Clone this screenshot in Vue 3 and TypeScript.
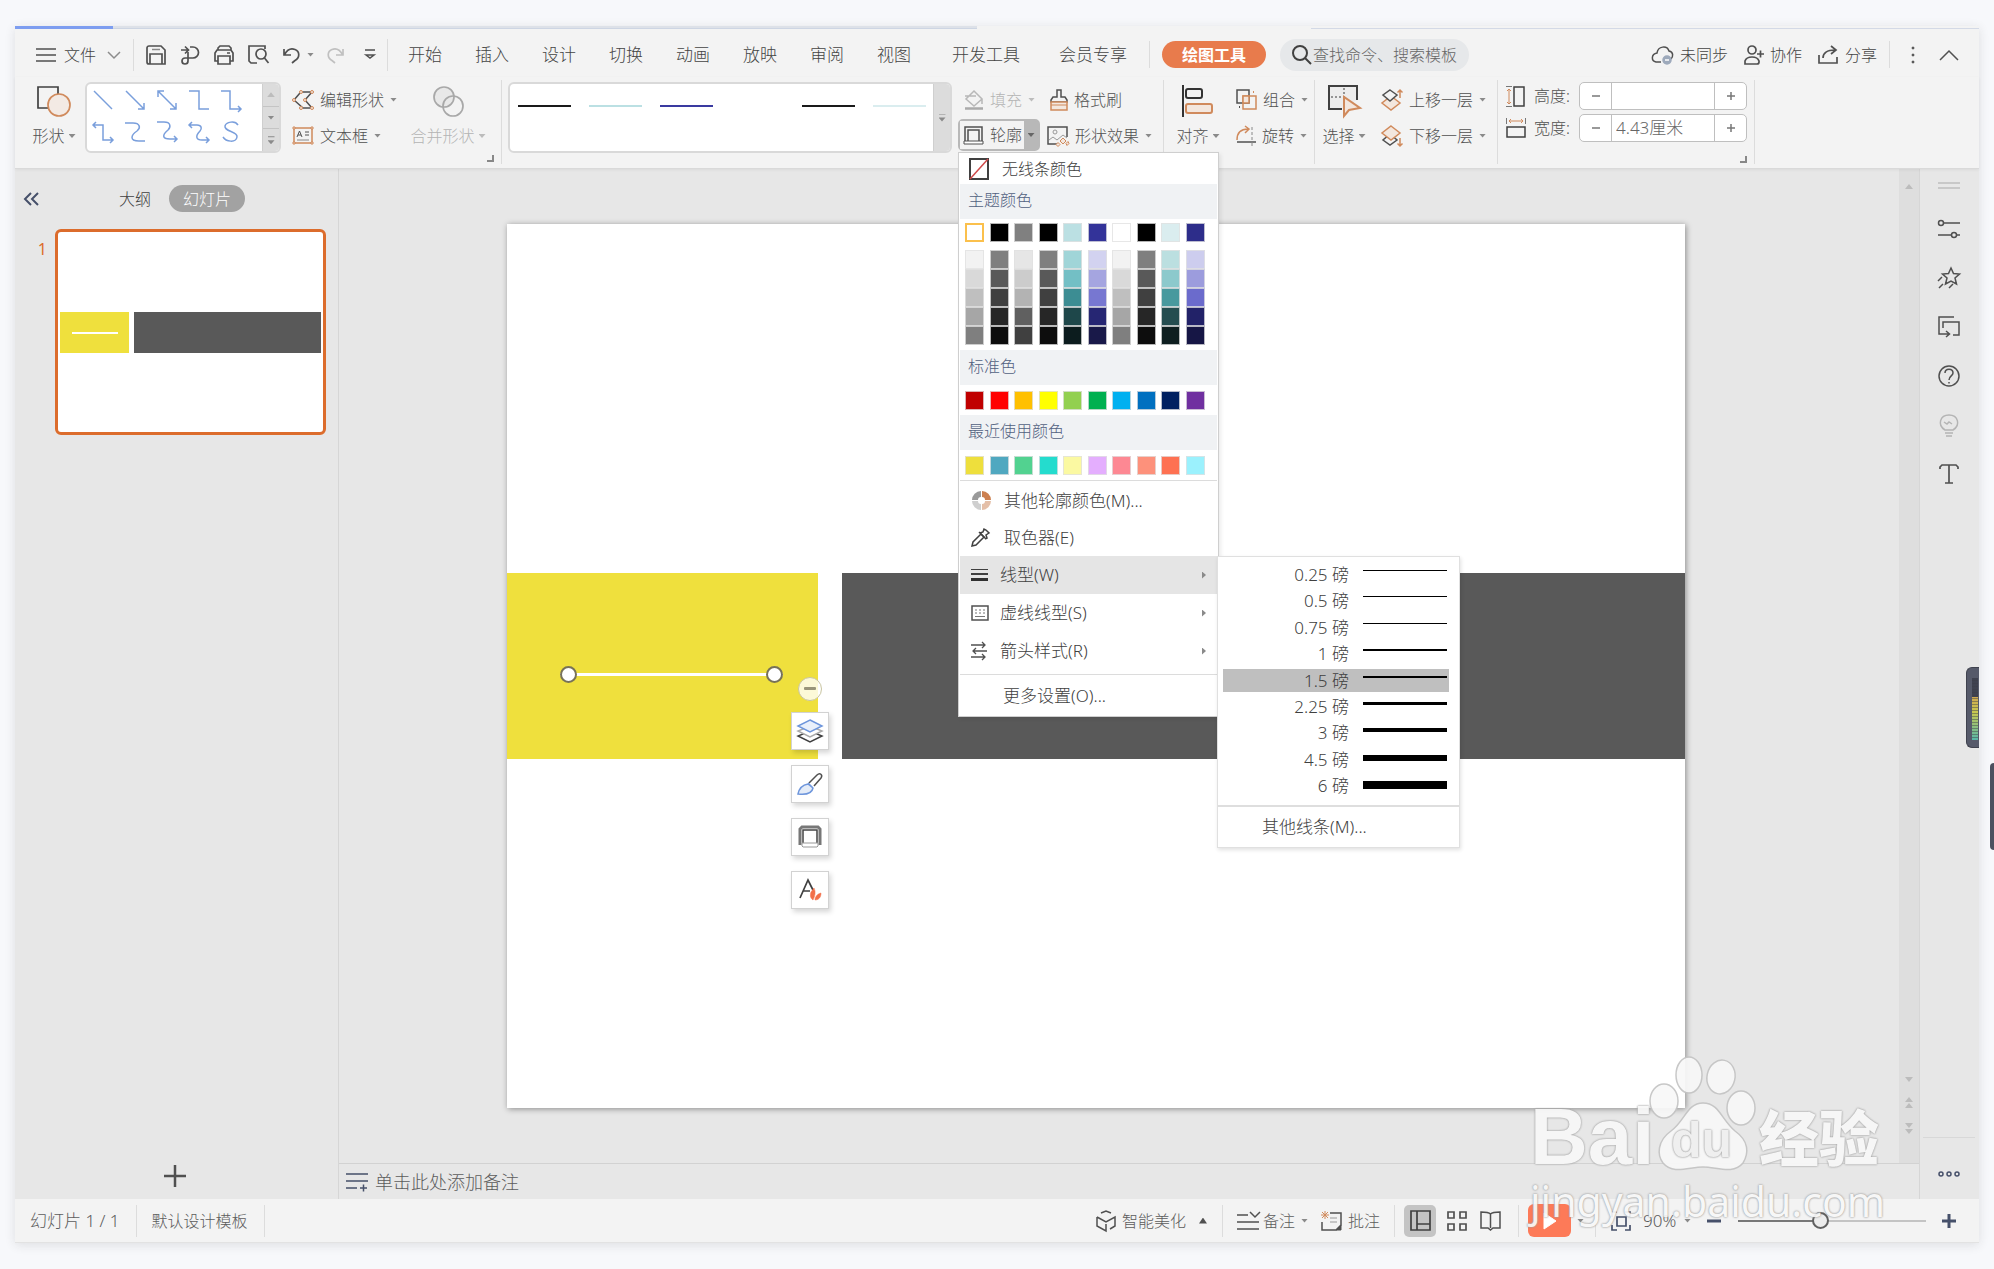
<script setup lang="ts">
import { h, ref } from 'vue'

type Stroke = [d: string, stroke?: string, fill?: string, width?: number]
interface Glyph { w: number; h: number; paths: Stroke[] }

const INK = '#505050'
const ORANGE = '#d08a5c'
const PEACH = '#f3e7de'
const BLUE = '#7a9fdc'
const PALE = '#a8a8a8'
const NAVY = '#46506a'

const ring = (cx: number, cy: number, r: number): string =>
  `M${cx - r} ${cy}a${r} ${r} 0 1 0 ${2 * r} 0a${r} ${r} 0 1 0 ${-2 * r} 0z`

const glyphs: Record<string, Glyph> = {
  menu: { w: 20, h: 14, paths: [['M0 1h20M0 7h20M0 13h20']] },
  chevronDown: { w: 14, h: 8, paths: [['M1 1l6 6l6-6', '#8c8c8c']] },
  chevronUp: { w: 20, h: 12, paths: [['M1 11l9-9l9 9']] },
  collapse: { w: 15, h: 14, paths: [['M7 1L1 7l6 6M14 1L8 7l6 6', NAVY, 'none', 2]] },
  save: { w: 20, h: 20, paths: [['M1 3a2 2 0 0 1 2-2h12l4 4v14H3a2 2 0 0 1-2-2zM4 19V9h12v10', '#505050', 'none', 1.7], ['M6 4.500h8', '#888']] },
  pdf: { w: 20, h: 20, paths: [['M1 5h7M5 1.500L8.500 5L5 8.500', '#505050', 'none', 1.7], ['M10 2h3a5 5 0 0 1 0 11H5a3 3 0 1 0 3 3V7', '#505050', 'none', 1.7]] },
  print: { w: 20, h: 20, paths: [['M4 5V3l2-2h9l2 2v2M4 16H1V8l2-3h14l2 3v8h-3M4 19v-8h12v8z', '#505050', 'none', 1.7], ['M13 8h3']] },
  preview: { w: 21, h: 20, paths: [['M9 18H3l-2-2V1h16v3', '#505050', 'none', 1.7], [ring(13, 9, 5), '#505050', 'none', 1.7], ['M16.500 13l4 5', '#505050', 'none', 1.7]] },
  undo: { w: 18, h: 18, paths: [['M1 3v6h7M1.500 8.500C4 4 8 2 12 3.500c5 2 5 8 0 11L9 17', '#505050', 'none', 1.7]] },
  redo: { w: 18, h: 18, paths: [['M17 3v6h-7M16.500 8.500C14 4 10 2 6 3.500c-5 2-5 8 0 11L9 17', '#c0c0c0', 'none', 1.7]] },
  more: { w: 12, h: 11, paths: [['M1 1h10M2 6l4 3l4-3z', '#505050', 'none', 1.5]] },
  search: { w: 22, h: 22, paths: [[ring(9, 9, 7), '#404040', 'none', 2], ['M14 14l6 6', '#404040', 'none', 2]] },
  cloud: { w: 23, h: 20, paths: [['M10 17H5c-5-1-5-8 1-9C7 1 16 0 18 6c5 1 4 6 2 8'], [ring(16, 15, 4), '#9da9bb', '#9da9bb'], ['M14 15h4', '#fff']] },
  person: { w: 20, h: 20, paths: [[ring(8, 5, 4), INK, 'none', 1.7], ['M1 19v-3c1-3 3-4 7-4c4 0 6 1 7 4v1c0 1-1 2-2 2zM13 9h7M16.500 5.500v7', INK, 'none', 1.7]] },
  share: { w: 21, h: 19, paths: [['M1 10v8h18v-6M5 13c0-5 4-8 12-8M13 1l5 4l-5 4', INK, 'none', 1.7]] },
  dots: { w: 4, h: 18, paths: [[ring(2, 2, 1), INK, INK, 1], [ring(2, 9, 1), INK, INK, 1], [ring(2, 16, 1), INK, INK, 1]] },
  shapes: { w: 34, h: 31, paths: [['M1 1h20v21H1z', '#404040', 'none', 1.7], [ring(22, 19, 11), ORANGE, '#f3eae4', 1.7]] },
  editShape: { w: 22, h: 20, paths: [['M8 3L2 10l9 8h9l-7-8l7-8H9', INK], [ring(9, 2, 1.5), ORANGE, PEACH, 1], [ring(20, 2, 1.5), ORANGE, PEACH, 1], [ring(2, 10, 1.5), ORANGE, PEACH, 1], [ring(13, 10, 1.5), ORANGE, PEACH, 1], [ring(9, 18, 1.5), ORANGE, PEACH, 1], [ring(20, 18, 1.5), ORANGE, PEACH, 1]] },
  textBox: { w: 22, h: 19, paths: [['M2 2h18v15H2z', ORANGE], ['M5 11L7.500 5L10 11M6 9h3M13 6h4M13 9h4', INK, 'none', 1], ['M5 14h12', '#888', 'none', 1], ['M1 1h2v2H1zM19 1h2v2h-2zM1 16h2v2H1zM19 16h2v2h-2z', ORANGE, PEACH, 1]] },
  merge: { w: 31, h: 31, paths: [[ring(11, 11, 10), PALE, '#e8e8e8', 1.7], [ring(20, 20, 10), PALE, 'none', 1.7]] },
  launcher: { w: 7, h: 7, paths: [['M0 6h6V0', '#888', 'none', 2]] },
  fill: { w: 20, h: 20, paths: [['M10 1l8 8l-8 7l-8-7zM1 6h11M18 9v5', '#b8b8b8'], ['M1 18.500h18', '#aaa', 'none', 2.5]] },
  outline: { w: 21, h: 19, paths: [['M2 15V1h17v14', INK], ['M5 15V4h11v11', INK], ['M1 15h19v3H1z', INK, '#fff', 1]] },
  brush: { w: 18, h: 22, paths: [['M7 8V1h4v7h4l2 3v2H1v-2l2-3z', INK], ['M1 13h16v8H1z', ORANGE, PEACH], ['M1 16h16', ORANGE, 'none', 1]] },
  effects: { w: 22, h: 20, paths: [['M11 18H1V1h19v10', INK], [ring(8, 6, 2), '#999', 'none', 1], ['M2 14l4-3l4 3l6-5l4 3', '#999', 'none', 1], ['M16 12l3 3l-3 3l-3-3zM11 16.500l2 2l-2 2l-2-2zM21 15.500l1 2l-2 2l-1-2z', ORANGE, PEACH, 1]] },
  align: { w: 32, h: 32, paths: [['M1 0v32', '#333', 'none', 2], ['M6 4h12a2 2 0 0 1 2 2v5a2 2 0 0 1-2 2H6a2 2 0 0 1-2-2V6a2 2 0 0 1 2-2z', '#333', 'none', 2], ['M6 19h22a2 2 0 0 1 2 2v5a2 2 0 0 1-2 2H6a2 2 0 0 1-2-2v-5a2 2 0 0 1 2-2z', ORANGE, PEACH, 2]] },
  group: { w: 21, h: 21, paths: [['M1 1h12v13H1z', INK], ['M7 7h13v13H7z', ORANGE], ['M7 7h6v7H7z', ORANGE, PEACH], ['M17 3h1', ORANGE, 'none', 2], ['M3 18h1', INK, 'none', 2]] },
  rotate: { w: 20, h: 20, paths: [['M1 14C1 7 5 3 12 3M9 0l4 3l-4 4', ORANGE], ['M1 16h19', INK], ['M16 1v3M16 6v3M16 11v3M16 16v4', '#888', 'none', 1]] },
  select: { w: 33, h: 32, paths: [['M14 24H1V1h28v14', '#404040', '#ededed', 2], ['M3 12h2M7 12h2M11 12h2M15 12h2M16 3v2M16 7v2', '#777', 'none', 1.5], ['M16 12v19l5-6l11-2z', ORANGE, PEACH, 2]] },
  moveUp: { w: 22, h: 22, paths: [['M10 7l9 7l-9 7l-9-7z', ORANGE, PEACH], ['M9 1l7 5l-7 6l-7-6z', INK, '#f3f3f3'], ['M19 9V1M16.500 3.500L19 1l2.500 2.500', ORANGE]] },
  moveDown: { w: 22, h: 22, paths: [['M9 9l7 6l-7 5l-7-5z', INK, '#f3f3f3'], ['M10 1l9 7l-9 7l-9-7z', ORANGE, PEACH], ['M19 13v8M16.500 18.500L19 21l2.500-2.500', ORANGE]] },
  height: { w: 20, h: 21, paths: [['M8 1h10v19H8z', '#404040'], ['M0 .500h6M0 20.500h6', '#777', 'none', 1], ['M3 3v15M1 5l2-2l2 2M1 16l2 2l2-2', ORANGE, 'none', 1]] },
  width: { w: 20, h: 20, paths: [['M1 9h18v10H1z', '#404040'], ['M.500 0v6M19.500 0v6', '#777', 'none', 1], ['M3 3h14M5 1L3 3l2 2M15 1l2 2l-2 2', ORANGE, 'none', 1]] },
  noLine: { w: 20, h: 22, paths: [['M1 1h18v20H1z', '#404040', '#fff', 2], ['M1 21L19 1', '#d04a4a']] },
  wheel: { w: 21, h: 21, paths: [['M10 4a6 6 0 0 0-6 6', '#9a9a9a', 'none', 6], ['M11 4a6 6 0 0 1 6 6', '#cc8050', 'none', 6], ['M4 11a6 6 0 0 0 6 6', '#cfcfcf', 'none', 6], ['M17 11a6 6 0 0 1-6 6', '#e4bfa8', 'none', 6]] },
  dropper: { w: 19, h: 19, paths: [['M1 18l1-4L10 6l3 3l-8 8z', '#404040'], ['M8 4l7 7M9 5l3-1l1-3l2 1l3 3l-3 2l1 3l-2 1', '#404040']] },
  weight: { w: 17, h: 14, paths: [['M0 1.500h17', '#404040', 'none', 1], ['M0 6h17', '#404040', 'none', 2], ['M0 11.500h17', '#303030', 'none', 3]] },
  dash: { w: 18, h: 16, paths: [['M1 1h16v14H1z', '#505050'], ['M4 5h2M8 5h2M12 5h2M4 8h2M8 8h2M12 8h2M4 11.500h10', '#777', 'none', 1]] },
  arrows: { w: 16, h: 18, paths: [['M0 3h14M11 0l3 3l-3 3M16 9H2M5 6L2 9l3 3M0 15h14M11 12l3 3l-3 3', '#505050', 'none', 1.3]] },
  layers: { w: 26, h: 24, paths: [['M13 12l12 5l-12 6l-12-6z', '#404040', '#fff'], ['M13 7l12 5l-12 6l-12-6z', '#aaa', '#fff'], ['M13 1l12 6l-12 6L1 7z', '#6e96dc', '#e9f0fb']] },
  paint: { w: 26, h: 24, paths: [['M12 11l8-8c3-3 6 0 4 3l-7 8', '#505050', '#fff'], ['M1 22c1-5 4-9 10-10l5 4c-1 5-7 7-15 6zM11 11l5 5', '#6e96dc', '#e4ecf8']] },
  frame: { w: 24, h: 24, paths: [['M2 20V4l2-2h16l2 2v16', '#777', 'none', 3], ['M5 18V5h14v13', '#444'], ['M4 18h16v3l-1 1H5l-1-1z', '#999', '#fff', 1]] },
  fontFire: { w: 24, h: 24, paths: [['M2 20L10 2l5 10M5 13h7', '#404040', 'none', 1.7], ['M15 22c-3-2-3-5-2-8l3-4c2 4 1 8-1 12z', '#f2704a', '#f2704a', 0.5], ['M17 22c0-3 2-6 6-7c0 4-2 7-6 7z', '#f2704a', '#f2704a', 0.5]] },
  grip: { w: 22, h: 8, paths: [['M0 1h22M0 6h22', '#c8c8c8', 'none', 2]] },
  sliders: { w: 22, h: 20, paths: [[ring(3, 4, 2.5)], ['M6 4h16M0 16h13M19 16h3'], [ring(16, 16, 2.5)]] },
  star: { w: 22, h: 22, paths: [['M13 1l2.500 5.500l6 .500l-4.500 4l1.500 6l-5.500-3l-5.500 3l1.500-6l-4.500-4l6-.500z'], ['M4 10l-4 4M5 17l-4 4M15 17l-4 4']] },
  transition: { w: 22, h: 22, paths: [['M16 1H1v17h10M8 15l3.500 3L8 21M5 12V6h16v13h-6']] },
  help: { w: 22, h: 22, paths: [[ring(11, 11, 10)], ['M7 8c0-5 8-5 8 0c0 3-4 3-4 7M11 17v1.500']] },
  bulb: { w: 20, h: 23, paths: [['M6 16C-2 11 1 1 10 1s12 10 4 15zM6 19h8M7 22h6M5 8l3 2l2-2l3 2', '#b4b4b4']] },
  text: { w: 20, h: 20, paths: [['M1 5V3l2-2h14l2 2v2M10 1v18M6 19h8', INK, 'none', 1.7]] },
  circles: { w: 22, h: 6, paths: [[ring(3, 3, 2), NAVY], [ring(11, 3, 2), NAVY], [ring(19, 3, 2), NAVY]] },
  plus: { w: 22, h: 22, paths: [['M0 11h22M11 0v22', INK, 'none', 2.5]] },
  notesAdd: { w: 22, h: 18, paths: [['M0 1h22M0 8h22M0 15h11M14 15h7M17.500 11.500v7', NAVY]] },
  hexagon: { w: 20, h: 22, paths: [['M5 3l5-2l5 2M1 7l9 5l9-5v9l-5 3M1 7v9l9 5v-7', INK]] },
  notes: { w: 23, h: 20, paths: [['M0 4h11M13 1l5 5l5-5M0 11h22M0 18h22', INK]] },
  comment: { w: 21, h: 20, paths: [['M9 2h11v12l-5 5H1v-8', INK], ['M9 7h7M9 11h7', '#999', 'none', 1], ['M4 0v8M0 4h8M1 1l6 6M7 1L1 7', ORANGE, 'none', 1], ['M20 14v5h-5z', INK, INK, 1]] },
  normalView: { w: 21, h: 21, paths: [['M1 1h19v19H1zM7 1v19M7 14h13', '#404040', 'none', 1.7]] },
  gridView: { w: 20, h: 20, paths: [['M1 1h6v6H1zM13 1h6v6h-6zM1 13h6v6H1zM13 13h6v6h-6z', INK, 'none', 1.7]] },
  bookView: { w: 21, h: 20, paths: [['M10.500 3c-2-2-5-2-9.500-2v16h7l2.500 2l2.500-2h7V1c-4.500 0-7.500 0-9.500 2zM10.500 3v14', INK]] },
  play: { w: 14, h: 18, paths: [['M1 1l12 8L1 17z', '#fff', '#fff', 1]] },
  fit: { w: 20, h: 20, paths: [['M1 6V1h5M14 1h5v5M19 14v5h-5M6 19H1v-5M6 6h9v9H6z', NAVY, 'none', 1.7]] },
  minus: { w: 14, h: 14, paths: [['M0 7h14', NAVY, 'none', 3]] },
  plusBold: { w: 14, h: 14, paths: [['M0 7h14M7 0v14', NAVY, 'none', 3]] },
  stepMinus: { w: 8, h: 8, paths: [['M0 4h8', '#777', 'none', 1.5]] },
  stepPlus: { w: 8, h: 8, paths: [['M0 4h8M4 0v8', '#777', 'none', 1.5]] },
  line1: { w: 22, h: 22, paths: [['M2 2l18 18', BLUE]] },
  line2: { w: 22, h: 22, paths: [['M2 2l18 18M20 14v6h-6', BLUE]] },
  line3: { w: 22, h: 22, paths: [['M2 2l18 18M20 14v6h-6M8 2H2v6', BLUE]] },
  line4: { w: 22, h: 22, paths: [['M1 2h10v18h10', BLUE]] },
  line5: { w: 22, h: 22, paths: [['M1 2h9v18h11M18 17l3 3l-3 3', BLUE]] },
  line6: { w: 22, h: 22, paths: [['M1 4h10v15h10M4 1L1 4l3 3M18 16l3 3l-3 3', BLUE]] },
  line7: { w: 22, h: 22, paths: [['M1 2h8c7 0 8 5 4 8c-6 4-8 10 2 10h6', BLUE]] },
  line8: { w: 22, h: 22, paths: [['M1 1h7c7 0 7 5 4 8c-6 5-6 9 2 9h7M18 15l3 3l-3 3', BLUE]] },
  line9: { w: 22, h: 22, paths: [['M1 4h8c5 0 5 4 3 6c-5 5-4 9 2 9h7M4 1L1 4l3 3M18 16l3 3l-3 3', BLUE]] },
  line10: { w: 22, h: 22, paths: [['M18 4C15-1 6 1 5 5c-1 6 13 5 12 11c-1 6-11 5-14 0', BLUE]] },
}

const Ico = (props: { name: string }) => {
  const g = glyphs[props.name]
  return h(
    'svg',
    { width: g.w, height: g.h, viewBox: `0 0 ${g.w} ${g.h}`, class: 'ico', 'aria-hidden': 'true' },
    g.paths.map(([d, stroke = INK, fill = 'none', width = 1.5]) =>
      h('path', { d, stroke, fill, 'stroke-width': width }),
    ),
  )
}
Ico.props = ['name']

const quick = ['save', 'pdf', 'print', 'preview']
const tabs = ['开始', '插入', '设计', '切换', '动画', '放映', '审阅', '视图']
const wideTabs = ['开发工具', '会员专享']
const connectors = Array.from({ length: 10 }, (_, i) => `line${i + 1}`)
const lineStyles = ['#1a1a1a', '#bbe0e3', '#3a3aa0', '#ffffff', '#1a1a1a', '#daedef']

const themeColors = ['#ffffff', '#000000', '#808080', '#000000', '#bbe0e3', '#333399', '#ffffff', '#000000', '#daedef', '#2d2d8a']
const tints = [
  ['#f2f2f2', '#7f7f7f', '#e6e6e6', '#7f7f7f', '#a0d5d8', '#d2d2f0', '#f2f2f2', '#7f7f7f', '#bbdfe0', '#cdcdee'],
  ['#d9d9d9', '#595959', '#cccccc', '#595959', '#73bfc5', '#a5a5e0', '#d9d9d9', '#595959', '#8cc9cc', '#9c9cdd'],
  ['#bfbfbf', '#404040', '#b3b3b3', '#404040', '#3c8d93', '#7777d1', '#bfbfbf', '#404040', '#48999e', '#6b6bcc'],
  ['#a6a6a6', '#262626', '#606060', '#262626', '#1e474a', '#262673', '#a6a6a6', '#262626', '#244d50', '#222268'],
  ['#7f7f7f', '#0d0d0d', '#404040', '#0d0d0d', '#0c1c1e', '#191949', '#7f7f7f', '#0d0d0d', '#0e1f20', '#161645'],
]
const standardColors = ['#c00000', '#ff0000', '#ffc000', '#ffff00', '#92d050', '#00b050', '#00b0f0', '#0070c0', '#002060', '#7030a0']
const recentColors = ['#eedf3c', '#50a8c0', '#52d290', '#24dcce', '#fbf9a2', '#e4aefe', '#fd8893', '#fd917b', '#fe7152', '#9bf1fd']

const weights = [
  { label: '0.25', px: 1 }, { label: '0.5', px: 1 }, { label: '0.75', px: 1 },
  { label: '1', px: 2 }, { label: '1.5', px: 2 }, { label: '2.25', px: 3 },
  { label: '3', px: 4 }, { label: '4.5', px: 6 }, { label: '6', px: 8 },
]
const activeWeight = ref('1.5')
const shapeHeight = ref('')
const shapeWidth = ref('4.43厘米')
const zoom = ref(43)

const floating = ['layers', 'paint', 'frame', 'fontFire']
const rail = ['sliders', 'star', 'transition', 'help', 'bulb', 'text']
</script>

<template>
  <div class="page">
    <div class="window">
      <div class="strip"><i class="on"></i><i class="off"></i><i class="gap"></i><i class="thin"></i></div>

      <header class="menubar">
        <button class="file"><Ico name="menu" /><span>文件</span><Ico name="chevronDown" /></button>
        <i class="sep"></i>
        <div class="quick">
          <button v-for="q in quick" :key="q" :aria-label="q"><Ico :name="q" /></button>
        </div>
        <div class="history">
          <button aria-label="undo"><Ico name="undo" /><i class="caret"></i></button>
          <button class="redo" aria-label="redo"><Ico name="redo" /></button>
          <button aria-label="more"><Ico name="more" /></button>
        </div>
        <i class="sep"></i>
        <nav class="tabs">
          <button v-for="t in tabs" :key="t">{{ t }}</button>
        </nav>
        <nav class="tabs wide">
          <button v-for="t in wideTabs" :key="t">{{ t }}</button>
        </nav>
        <i class="sep short"></i>
        <button class="active-tab">绘图工具</button>
        <label class="search"><Ico name="search" /><input type="text" aria-label="搜索" placeholder="查找命令、搜索模板" /></label>
        <div class="account">
          <button><Ico name="cloud" />未同步</button>
          <button><Ico name="person" />协作</button>
          <button><Ico name="share" />分享</button>
          <i class="sep short"></i>
          <button aria-label="options" class="dots"><Ico name="dots" /></button>
          <button aria-label="collapse"><Ico name="chevronUp" /></button>
        </div>
      </header>

      <section class="ribbon">
        <button class="big shape-btn"><span class="pic"><Ico name="shapes" /></span><span class="cap">形状<i class="caret"></i></span></button>
        <div class="gallery shapes">
          <div class="grid">
            <button v-for="c in connectors" :key="c" :aria-label="c"><Ico :name="c" /></button>
          </div>
          <div class="scroller">
            <button aria-label="up"><i class="caret up faint"></i></button>
            <button aria-label="down"><i class="caret"></i></button>
            <button aria-label="expand"><i class="caret bar"></i></button>
          </div>
        </div>
        <div class="pair edit">
          <button><Ico name="editShape" />编辑形状<i class="caret"></i></button>
          <button><Ico name="textBox" />文本框<i class="caret"></i></button>
        </div>
        <button class="big merge" disabled><span class="pic"><Ico name="merge" /></span><span class="cap">合并形状<i class="caret"></i></span></button>
        <button class="launch" aria-label="shape settings"><Ico name="launcher" /></button>
        <i class="sep tall"></i>

        <div class="gallery lines">
          <div class="line-row">
            <button v-for="(c, i) in lineStyles" :key="i" :aria-label="'line ' + i"><i :style="{ background: c }"></i></button>
          </div>
          <div class="scroller"><button aria-label="expand"><i class="caret bar"></i></button></div>
        </div>

        <div class="pair paint">
          <button class="fill" disabled><Ico name="fill" />填充<i class="caret"></i></button>
          <div class="outline">
            <button class="main"><Ico name="outline" />轮廓</button>
            <button class="side" aria-label="outline menu"><i class="caret"></i></button>

            <div class="menu">
              <button class="none"><Ico name="noLine" />无线条颜色</button>
              <h3>主题颜色</h3>
              <div class="swatches theme">
                <button v-for="(c, i) in themeColors" :key="i" :class="{ picked: i === 0 }" :style="{ background: c }" :aria-label="c"></button>
              </div>
              <div class="tints">
                <div v-for="(row, r) in tints" :key="r" class="swatches">
                  <button v-for="(c, i) in row" :key="i" :style="{ background: c }" :aria-label="c"></button>
                </div>
              </div>
              <h3>标准色</h3>
              <div class="swatches flat">
                <button v-for="c in standardColors" :key="c" :style="{ background: c }" :aria-label="c"></button>
              </div>
              <h3>最近使用颜色</h3>
              <div class="swatches flat">
                <button v-for="c in recentColors" :key="c" :style="{ background: c }" :aria-label="c"></button>
              </div>
              <div class="entries">
                <button class="entry indent"><span class="pic"><Ico name="wheel" /></span>其他轮廓颜色(M)...</button>
                <button class="entry indent"><span class="pic"><Ico name="dropper" /></span>取色器(E)</button>
                <div class="parent">
                  <button class="entry hot"><span class="pic"><Ico name="weight" /></span>线型(W)<i class="more"></i></button>
                  <div class="submenu">
                    <div class="weights">
                      <button v-for="w in weights" :key="w.label" :class="{ active: w.label === activeWeight }" @click="activeWeight = w.label">
                        <span>{{ w.label }} 磅</span><i :style="{ height: w.px + 'px' }"></i>
                      </button>
                    </div>
                    <button class="other">其他线条(M)...</button>
                  </div>
                </div>
                <button class="entry"><span class="pic"><Ico name="dash" /></span>虚线线型(S)<i class="more"></i></button>
                <button class="entry"><span class="pic"><Ico name="arrows" /></span>箭头样式(R)<i class="more"></i></button>
              </div>
              <button class="entry indent last"><span class="pic"></span>更多设置(O)...</button>
            </div>
          </div>
        </div>
        <div class="pair effects">
          <button><Ico name="brush" />格式刷</button>
          <button><Ico name="effects" />形状效果<i class="caret"></i></button>
        </div>
        <i class="sep tall"></i>

        <button class="big align"><span class="pic"><Ico name="align" /></span><span class="cap">对齐<i class="caret"></i></span></button>
        <div class="pair arrange">
          <button><Ico name="group" />组合<i class="caret"></i></button>
          <button><Ico name="rotate" />旋转<i class="caret"></i></button>
        </div>
        <i class="sep tall"></i>

        <button class="big choose"><span class="pic"><Ico name="select" /></span><span class="cap">选择<i class="caret"></i></span></button>
        <div class="pair order">
          <button><Ico name="moveUp" />上移一层<i class="caret"></i></button>
          <button><Ico name="moveDown" />下移一层<i class="caret"></i></button>
        </div>
        <i class="sep tall"></i>

        <div class="size">
          <div class="field">
            <Ico name="height" /><label for="sh">高度:</label>
            <div class="stepper"><button aria-label="less"><Ico name="stepMinus" /></button><input id="sh" v-model="shapeHeight" type="text" /><button aria-label="more"><Ico name="stepPlus" /></button></div>
          </div>
          <div class="field">
            <Ico name="width" /><label for="sw">宽度:</label>
            <div class="stepper"><button aria-label="less"><Ico name="stepMinus" /></button><input id="sw" v-model="shapeWidth" type="text" /><button aria-label="more"><Ico name="stepPlus" /></button></div>
          </div>
          <button class="launch-end" aria-label="size settings"><Ico name="launcher" /></button>
        </div>
        <i class="sep tall"></i>
      </section>

      <main class="body">
        <aside class="outline-pane">
          <div class="pane-head">
            <button aria-label="collapse"><Ico name="collapse" /></button>
            <button class="outline-tab">大纲</button>
            <button class="slides-tab">幻灯片</button>
          </div>
          <div class="thumb-row">
            <span class="num">1</span>
            <div class="thumb"><div class="strip-shapes"><i class="yellow"><b></b></i><i class="dark"></i></div></div>
          </div>
          <button class="add" aria-label="add slide"><Ico name="plus" /></button>
        </aside>

        <div class="work">
          <div class="stage">
            <div class="canvas">
              <div class="slide">
                <div class="yellow"></div>
                <div class="dark"></div>
                <div class="stroke"><i></i><i></i></div>
                <div class="tools">
                  <button class="fold" aria-label="fold"><i></i></button>
                  <button v-for="f in floating" :key="f" class="tool" :aria-label="f"><Ico :name="f" /></button>
                </div>
              </div>
            </div>
            <div class="scrollbar">
              <i class="caret up faint"></i>
              <div class="bottom">
                <i class="caret faint"></i>
                <span><i class="caret up faint"></i><i class="caret up faint"></i></span>
                <span><i class="caret faint"></i><i class="caret faint"></i></span>
              </div>
            </div>
          </div>
          <div class="notes"><Ico name="notesAdd" /><span>单击此处添加备注</span></div>
        </div>

        <aside class="rail">
          <Ico name="grip" />
          <button v-for="r in rail" :key="r" :aria-label="r"><Ico :name="r" /></button>
          <div class="rail-end"><button aria-label="more"><Ico name="circles" /></button></div>
          <div class="meter"><i></i></div>
        </aside>
      </main>

      <footer class="status">
        <span class="count">幻灯片 1 / 1</span>
        <i class="sep"></i>
        <span class="template">默认设计模板</span>
        <i class="sep"></i>
        <div class="right">
          <button class="beauty"><Ico name="hexagon" />智能美化<i class="caret up dark"></i></button>
          <i class="sep"></i>
          <button class="note-btn"><Ico name="notes" />备注<i class="caret"></i></button>
          <button class="comment-btn"><Ico name="comment" />批注</button>
          <i class="sep"></i>
          <div class="views">
            <button class="current" aria-label="normal"><Ico name="normalView" /></button>
            <button aria-label="sorter"><Ico name="gridView" /></button>
            <button aria-label="reading"><Ico name="bookView" /></button>
          </div>
          <i class="sep"></i>
          <button class="play" aria-label="play"><Ico name="play" /></button>
          <i class="caret"></i>
          <i class="sep play-sep"></i>
          <button class="fit" aria-label="fit"><Ico name="fit" /></button>
          <label class="zoom-level"><select aria-label="zoom"><option>90%</option></select><i class="caret"></i></label>
          <button aria-label="zoom out"><Ico name="minus" /></button>
          <input v-model="zoom" class="slider" type="range" min="0" max="100" aria-label="zoom slider" />
          <button aria-label="zoom in"><Ico name="plusBold" /></button>
        </div>
      </footer>
    </div>

    <div class="dock"></div>

    <div class="watermark">
      <div class="logo">
        <span class="bai">Bai</span>
        <div class="paw">
          <svg width="112" height="118" viewBox="0 0 112 118" aria-hidden="true">
            <g fill="#f8f8f8" stroke="#c4c4c4" stroke-width="1.500">
              <ellipse cx="17" cy="46" rx="14" ry="17" />
              <ellipse cx="42" cy="20" rx="13" ry="18" />
              <ellipse cx="74" cy="22" rx="14" ry="17" transform="rotate(12 74 22)" />
              <ellipse cx="94" cy="53" rx="14" ry="17" />
              <path d="M56 48C40 48 38 66 24 76C10 86 10 100 16 108C26 120 42 112 56 112S86 120 96 108C102 98 102 86 88 76C74 64 72 48 56 48z" />
            </g>
          </svg>
          <span>du</span>
        </div>
        <span class="jingyan">经验</span>
      </div>
      <span class="url">jingyan.baidu.com</span>
    </div>
  </div>
</template>

<style>
body { background: #f7f8fb; }
</style>

<style scoped>
* { box-sizing: border-box; }
button, input, select { font: inherit; color: inherit; border: 0; padding: 0; margin: 0; background: none; border-radius: 0; outline: 0; }
button { display: flex; align-items: center; white-space: nowrap; cursor: pointer; }
h3 { margin: 0; }
.page { position: relative; min-height: 100vh; padding: 26px 15px; display: flex; font: 300 16px/20px "Noto Sans", "Noto Sans CJK SC", sans-serif; color: #505050; overflow: hidden; }
.window { flex: 1; min-width: 0; display: flex; flex-direction: column; background: #e7e7e7; box-shadow: 0 2px 10px rgba(40, 40, 40, .12); }
.page :deep(.ico) { display: block; flex: none; overflow: visible; }

.caret { flex: none; width: 7px; height: 4px; background: #8a8a8a; clip-path: polygon(0 0, 100% 0, 50% 100%); }
.caret.up { clip-path: polygon(50% 0, 100% 100%, 0 100%); }
.caret.faint { background: #bcbcbc; width: 8px; height: 5px; }
.caret.dark { background: #505050; width: 8px; height: 6px; }
.caret.bar { height: 8px; clip-path: polygon(0 0, 100% 0, 100% 1px, 0 1px, 0 4px, 100% 4px, 50% 100%, 0 4px); }
.sep { flex: none; width: 1px; height: 32px; background: #dcdcdc; }
.sep.short { height: 27px; }
.sep.tall { align-self: stretch; height: auto; margin: 3px 0 4px; }

.strip { display: flex; height: 3px; background: #f3f3f3; }
.strip i { height: 3px; }
.strip .on { width: 5%; background: #7d9df0; }
.strip .off { width: 44%; background: #dde1e8; border-bottom: 1px solid #cdd5e3; }
.strip .gap { width: 17%; }
.strip .thin { flex: 1; border-bottom: 1px solid #d3d9e6; }

.menubar { display: flex; align-items: center; height: 48px; padding: 3px 20px 0 21px; background: #f3f3f3; color: #444; }
.file { gap: 8px; margin-right: 12px; }
.file span { margin-right: 3px; }
.quick { display: flex; gap: 14px; margin-left: 12px; }
.history { display: flex; align-items: center; margin: 0 11px 0 14px; }
.history button { gap: 6px; }
.history .redo { margin: 0 20px 0 12px; }
.tabs { display: flex; gap: 33px; margin-left: 20px; font-size: 17px; }
.tabs.wide { gap: 39px; margin: 0 22px 0 41px; }
.active-tab { height: 27px; padding: 0 20px; margin: 0 14px 0 12px; border-radius: 14px; background: #e87b4c; color: #fff; font-weight: 700; }
.search { display: flex; align-items: center; width: 189px; height: 32px; padding-left: 11px; border-radius: 16px; background: #e6e8ea; }
.search input { flex: 1; min-width: 0; }
.search input::placeholder { color: #666; opacity: 1; }
.account { display: flex; align-items: center; margin-left: auto; }
.account button { gap: 6px; margin-right: 16px; }
.account .sep { margin: 0 21px 0 -4px; }
.account .dots { margin-right: 24px; }
.account button:last-child { margin-right: 0; }

.ribbon { position: relative; z-index: 2; display: flex; align-items: flex-start; height: 92px; padding-left: 15px; background: #f3f3f3; border-bottom: 1px solid #d9d9d9; box-shadow: 0 1px 3px rgba(0, 0, 0, .06); }
.big, .pair, .gallery, .size { margin-top: 5px; }
.big { flex: none; flex-direction: column; height: 70px; width: 44px; }
.big .pic { display: flex; align-items: center; justify-content: center; height: 38px; margin-bottom: 6px; }
.big .cap { display: flex; align-items: center; gap: 4px; }
.big:disabled, .fill:disabled { color: #b4b4b4; }
.big:disabled .caret, .fill:disabled .caret { background: #bcbcbc; }
.shape-btn { width: 48px; }
.gallery { display: flex; height: 71px; border: 2px solid #d9d9d9; border-radius: 6px; background: #fff; overflow: hidden; }
.gallery.shapes { flex: none; width: 196px; margin-left: 7px; }
.grid { flex: 1; display: grid; grid-template-columns: repeat(5, 1fr); padding: 0 15px 3px 0; }
.grid button { justify-content: center; }
.scroller { flex: none; width: 17px; display: flex; flex-direction: column; background: #dcdcdc; border-left: 1px solid #cfcfcf; }
.scroller button { flex: 1; justify-content: center; }
.scroller button + button { border-top: 1px solid #c4c4c4; }
.pair { flex: none; display: flex; flex-direction: column; gap: 2px; }
.pair > button { height: 34px; padding-top: 1px; gap: 6px; }
.edit { width: 106px; margin-left: 11px; }
.merge { width: 76px; margin-left: 12px; }
.launch { align-self: flex-end; margin: 0 7px 6px 1px; }
.gallery.lines { flex: 0 1 444px; margin-left: 6px; }
.line-row { flex: 1; min-width: 0; overflow: hidden; display: flex; padding: 21px 0 0 8px; }
.line-row button { flex: 0 0 71px; align-items: flex-start; }
.line-row i { width: 53px; height: 2px; }
.paint { width: 82px; margin-left: 6px; }
.fill { padding-left: 6px; }
.outline { position: relative; display: flex; height: 32px; margin-top: 1px; border: 2px solid #b8b8b8; border-radius: 5px; background: #b8b8b8; }
.outline .main { flex: 1; gap: 6px; padding-left: 3px; background: #f3f3f3; }
.outline .side { width: 14px; justify-content: center; }
.outline .side .caret { background: #666; }
.effects { width: 105px; margin: 5px 11px 0 7px; }
.effects button:first-child { padding-left: 3px; }
.align { margin-left: 12px; }
.arrange { margin: 5px 6px 0 16px; }
.choose { margin-left: 7px; }
.order { margin: 5px 11px 0 15px; }
.size { display: flex; flex-direction: column; gap: 4px; margin-left: 8px; margin-right: 7px; }
.field { display: flex; align-items: center; height: 28px; }
.field label { width: 45px; margin-left: 8px; white-space: nowrap; }
.stepper { display: flex; width: 168px; height: 28px; border: 1px solid #bfbfbf; border-radius: 5px; background: #fff; }
.stepper button { width: 31px; justify-content: center; }
.stepper input { flex: 1; min-width: 0; padding-left: 4px; border: solid #bfbfbf; border-width: 0 1px; color: #666; font-size: 17px; }
.launch-end { align-self: flex-end; margin-top: 10px; }

.menu { position: absolute; left: -2px; top: 31px; width: 261px; background: #fff; border: 1px solid #cfcfcf; box-shadow: 2px 2px 4px rgba(0, 0, 0, .08); color: #404040; }
.menu .none { height: 31px; padding-left: 10px; gap: 13px; width: 100%; }
.menu h3 { height: 35px; margin: 0 1px; padding-left: 8px; font: inherit; line-height: 33px; background: #f0f2f4; color: #52617f; }
.swatches { display: flex; justify-content: space-between; width: 240px; margin-left: 6px; }
.swatches button { width: 19px; height: 19px; border: 1px solid rgba(225, 225, 225, .8); background-clip: border-box; }
.swatches .picked { border: 2px solid #fbc04c; }
.swatches.theme { margin-top: 4px; }
.tints { margin: 8px 0 5px; }
.swatches.flat { padding: 6px 0 5px; }
.entries { margin: 0 1px; padding: 1px 0 4px; border: solid #dcdcdc; border-width: 1px 0; }
.entry { width: 100%; height: 38px; font-size: 17px; }
.entry .pic { width: 32px; padding-left: 11px; margin-right: 8px; flex: none; }
.entry.indent { height: 37px; }
.entry.indent .pic { margin-right: 12px; padding-left: 11px; }
.entry.hot { background: #e5e5e5; }
.entry .more { width: 4px; height: 7px; margin: 0 11px 0 auto; background: #8a8a8a; clip-path: polygon(0 0, 100% 50%, 0 100%); }
.entry.last { height: 41px; }
.parent { position: relative; }
.submenu { position: absolute; left: 100%; top: 0; width: 243px; background: #fff; border: 1px solid #e0e0e0; box-shadow: 1px 2px 4px rgba(0, 0, 0, .12); font-size: 17px; }
.weights { display: flex; flex-direction: column; justify-content: space-between; height: 250px; padding: 6px 10px 8px 5px; border-bottom: 2px solid #dedede; }
.weights button { height: 23px; gap: 14px; align-items: flex-start; }
.weights span { width: 126px; text-align: right; line-height: 24px; }
.weights i { width: 84px; background: #000; margin-top: 7px; }
.weights .active { background: #bfbfbf; }
.submenu .other { width: 100%; height: 40px; padding-left: 44px; }

.body { flex: 1; display: flex; position: relative; z-index: 1; }
.outline-pane { flex: none; width: 324px; display: flex; flex-direction: column; border-right: 1px solid #d6d6d6; }
.pane-head { display: flex; align-items: center; height: 27px; margin: 16px 0 17px; padding-left: 9px; color: #404040; }
.outline-tab { margin-left: 80px; }
.slides-tab { height: 27px; margin-left: 18px; padding: 0 14px; border-radius: 14px; background: #a2a2a2; color: #fff; }
.thumb-row { display: flex; }
.num { width: 40px; padding: 10px 8px 0 0; text-align: right; font-weight: 400; color: #dc6c2c; }
.thumb { flex: 1; margin-right: 12px; height: 206px; border: 3px solid #dc6c2c; border-radius: 6px; background: #fff; padding: 80px 2px 0; }
.strip-shapes { display: flex; gap: 5px; height: 41px; }
.strip-shapes .yellow { flex: 69; display: flex; align-items: center; justify-content: center; background: #efe03d; }
.strip-shapes b { width: 46px; height: 2px; background: #fff; }
.strip-shapes .dark { flex: 186; background: #595959; }
.add { margin: auto auto 12px 149px; }

.work { flex: 1; min-width: 0; display: flex; flex-direction: column; }
.stage { flex: 1; display: flex; }
.canvas { flex: 1; min-width: 0; padding: 55px 214px 54px 168px; }
.slide { position: relative; aspect-ratio: 1178 / 884; background: #fff; box-shadow: 1px 1px 6px rgba(0, 0, 0, .4); }
.slide .yellow, .slide .dark { position: absolute; top: 39.5%; height: 21%; }
.slide .yellow { left: 0; width: 26.4%; background: #efe03d; }
.slide .dark { left: 28.4%; right: 0; background: #595959; }
.stroke { position: absolute; left: 4.5%; top: 50%; width: 18.9%; height: 17px; display: flex; justify-content: space-between; background: linear-gradient(#fff, #fff) center / 100% 3px no-repeat; }
.stroke i { width: 17px; height: 17px; border: 2px solid #777258; border-radius: 50%; background: #fff; }
.tools { position: absolute; left: 24.1%; top: 51.2%; display: flex; flex-direction: column; gap: 15px; align-items: center; }
.fold { width: 24px; height: 24px; justify-content: center; border: 1px solid #c8c4a0; border-radius: 50%; background: rgba(255, 255, 255, .8); margin-bottom: -4px; }
.fold i { width: 12px; height: 3px; background: #99957a; border-radius: 1px; }
.tool { width: 38px; height: 38px; justify-content: center; background: #fff; border: 1px solid #d2d2d2; box-shadow: 2px 3px 5px rgba(0, 0, 0, .16); }
.scrollbar { width: 20px; display: flex; flex-direction: column; align-items: center; justify-content: space-between; padding: 15px 0 29px; background: #dedede; }
.scrollbar .bottom { display: flex; flex-direction: column; align-items: center; gap: 15px; }
.scrollbar span { display: flex; flex-direction: column; gap: 1px; }
.notes { display: flex; align-items: center; gap: 7px; height: 36px; padding: 1px 0 0 7px; border-top: 1px solid #d2d2d2; font-size: 18px; color: #5c5c5c; }

.rail { position: relative; flex: none; width: 60px; display: flex; flex-direction: column; align-items: center; padding: 13px 1px 0 0; border-left: 1px solid #d6d6d6; }
.rail > button { width: 22px; height: 22px; justify-content: center; margin-top: 27px; }
.rail > .ico { margin-bottom: 1px; }
.rail-end { width: 52px; margin-top: auto; padding: 33px 0 22px; border-top: 1px solid #d8d8d8; display: flex; justify-content: center; }
.meter { position: absolute; right: 0; top: 498px; width: 13px; height: 81px; padding: 10px 2px 9px 5px; border-radius: 6px 0 0 6px; background: #565a6a; border: 1px solid #3f424e; border-right: 0; }
.meter i { display: block; width: 6px; height: 62px; background: repeating-linear-gradient(transparent 0 2px, rgba(60, 60, 70, .45) 2px 3px), linear-gradient(#3f4250 30%, #d0a850 30%, #c8c850 55%, #58b8a8); }
.dock { position: absolute; right: 0; top: 763px; width: 4px; height: 87px; border-radius: 4px 0 0 4px; background: #4c505f; }

.status { display: flex; align-items: center; height: 44px; padding: 0 23px 0 15px; background: #f3f3f3; border-bottom: 1px solid #e2e2e2; color: #5c5c5c; }
.count { margin-right: 16px; font-size: 17px; }
.template { margin: 0 16px 0 15px; }
.right { display: flex; align-items: center; margin-left: auto; }
.right > .sep { margin-right: 9px; }
.right button { gap: 6px; }
.beauty { margin-right: 15px; }
.beauty .caret { margin-left: 7px; }
.right .note-btn { margin: 0 13px 0 5px; gap: 3px; }
.note-btn .caret { margin-left: 3px; }
.comment-btn { margin-right: 14px; }
.views { display: flex; align-items: center; gap: 13px; margin-right: 17px; }
.views .current { width: 32px; height: 32px; margin-right: -2px; justify-content: center; border-radius: 5px; background: #c4c4c4; }
.right .play { width: 43px; height: 33px; justify-content: center; margin-right: 6px; border-radius: 6px; background: #fd7a58; }
.right .play-sep { margin: 0 15px 0 11px; }
.fit { margin-right: 12px; }
.zoom-level { display: flex; align-items: center; gap: 5px; margin-right: 16px; }
.zoom-level select { appearance: none; width: 36px; font-size: 17px; }
.slider { appearance: none; width: 188px; height: 18px; margin: 0 16px 0 17px; background: linear-gradient(90deg, #777 43%, #c4c4c4 43%) center / 100% 2px no-repeat; }
.slider::-webkit-slider-thumb { appearance: none; width: 17px; height: 17px; border: 2px solid #606060; border-radius: 50%; background: #ececec; }

.watermark { position: absolute; z-index: 5; right: 108px; bottom: 44px; width: 356px; display: flex; flex-direction: column; gap: 4px; pointer-events: none; color: #f8f8f8; text-shadow: 0 0 2px #999, 0 0 2px #aaa; opacity: .93; }
.logo { display: flex; align-items: flex-end; height: 118px; white-space: nowrap; }
.bai { width: 117px; font: 700 80px/72px "Liberation Sans", sans-serif; }
.paw { position: relative; width: 112px; height: 118px; }
.paw span { position: absolute; left: 24px; top: 58px; font: 700 50px/54px "Liberation Sans", sans-serif; color: #f0f0f0; }
.jingyan { font-size: 60px; line-height: 70px; font-weight: 900; }
.url { font: 41px/48px "Noto Sans", sans-serif; white-space: nowrap; }
</style>
